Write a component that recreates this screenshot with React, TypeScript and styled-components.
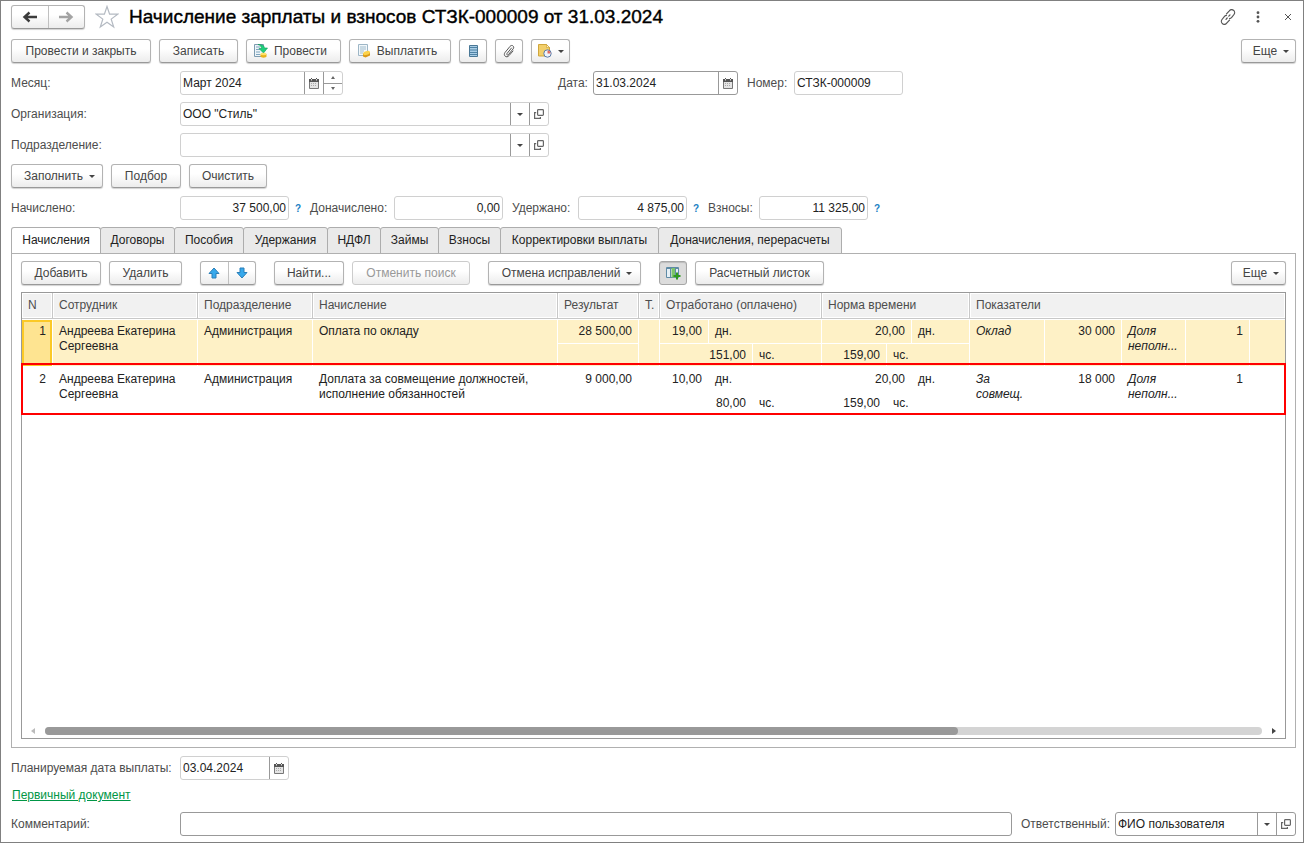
import React from "react";
import styled, { createGlobalStyle, css } from "styled-components";

const GlobalStyle = createGlobalStyle`
  *, *::before, *::after { box-sizing: border-box; }
  body {
    margin: 0;
    background: #fff;
    color: #4d4d4d;
    font: 12px/15px "Liberation Sans", Arial, sans-serif;
  }
  button, input, select { font: inherit; color: inherit; margin: 0; }
`;

const Window = styled.main`
  display: flex;
  flex-direction: column;
  min-height: 100vh;
  padding: 4px 7px 6px 10px;
  border: 1px solid #808080;
`;

const TitleBar = styled.header`
  display: flex;
  align-items: center;
  gap: 10px;
  height: 24px;
  margin-bottom: 10px;
`;

const Title = styled.h1`
  margin: 0 auto 0 0;
  color: #000;
  font-size: 19px;
  line-height: 24px;
  font-weight: 400;
  white-space: nowrap;
  -webkit-text-stroke: 0.4px #000;
`;

const IconButton = styled.button`
  display: flex;
  align-items: center;
  justify-content: center;
  padding: 0;
  border: 0;
  background: none;
  cursor: pointer;
`;

const WindowActions = styled.div`
  display: flex;
  gap: 14px;
  button { width: 16px; height: 16px; }
`;

const Toolbar = styled.div<{ $after?: number }>`
  display: flex;
  gap: 8px;
  margin-bottom: ${(p) => p.$after ?? 8}px;
`;

const Spacer = styled.span<{ $grow?: boolean }>`
  flex: ${(p) => (p.$grow ? "1" : "0 0 2px")};
`;

const raised = css`
  height: 24px;
  border: 1px solid #b3b3b3;
  border-bottom-color: #999;
  border-radius: 3px;
  background: linear-gradient(#fff 40%, #ececec);
  box-shadow: 0 1px 1px rgba(0, 0, 0, 0.18);
`;

const Button = styled.button<{ $w: number; $pressed?: boolean; $kind?: "menu" | "icon" }>`
  ${raised}
  display: flex;
  flex: 0 0 ${(p) => p.$w}px;
  align-items: center;
  justify-content: center;
  gap: 6px;
  padding: ${(p) => (p.$kind === "menu" ? "0 0 0 5px" : p.$kind === "icon" ? "0 6px 0 0" : "0")};
  color: #444;
  white-space: nowrap;
  cursor: pointer;
  ${(p) =>
    p.$pressed &&
    css`
      background: #dcdcdc;
      border-color: #a6a6a6;
      box-shadow: inset 0 1px 1px rgba(0, 0, 0, 0.15);
    `}
  &:disabled {
    color: #999;
    border-color: #ccc;
    box-shadow: none;
    cursor: default;
  }
`;

const Pair = styled.div<{ $w: number }>`
  ${raised}
  display: flex;
  flex: 0 0 ${(p) => p.$w}px;
  button { flex: 1; }
  button + button { border-left: 1px solid #c0c0c0; }
`;

const FormRow = styled.div<{ $after?: number }>`
  display: flex;
  align-items: center;
  height: 24px;
  margin-bottom: ${(p) => p.$after ?? 7}px;
`;

const Label = styled.label<{ $w: number }>`
  flex: 0 0 ${(p) => p.$w}px;
  white-space: nowrap;
`;

const Slot = styled.div`
  flex: 0 0 378px;
`;

const Gap = styled.span`
  flex: 0 0 9px;
`;

const Field = styled.div<{ $w?: number; $dark?: boolean }>`
  display: flex;
  flex: ${(p) => (p.$w ? `0 0 ${p.$w}px` : "1")};
  width: ${(p) => (p.$w ? `${p.$w}px` : "auto")};
  height: 24px;
  border: 1px solid ${(p) => (p.$dark ? "#999" : "#d0d0d0")};
  border-radius: 3px;
  background: #fff;
`;

const TextInput = styled.input<{ $right?: boolean }>`
  flex: 1;
  min-width: 0;
  height: 22px;
  padding: 0 2px;
  border: 0;
  outline: 0;
  background: none;
  color: #222;
  text-align: ${(p) => (p.$right ? "right" : "left")};
`;

const FieldButton = styled(IconButton)`
  flex: 0 0 19px;
  padding-right: 1px;
  border-left: 1px solid #999;
`;

const Stepper = styled.div`
  display: flex;
  flex-direction: column;
  flex: 0 0 19px;
  border-left: 1px solid #999;
  button { flex: 1; }
  button + button { border-top: 1px solid #999; }
`;

const SelectBox = styled.div`
  display: grid;
  flex: 1;
  grid-template-columns: 1fr 19px;
  select {
    grid-area: 1 / 1 / 2 / 3;
    padding: 0 2px;
    border: 0;
    outline: 0;
    appearance: none;
    background: none;
    color: #222;
  }
`;

const SelectArrow = styled.span`
  display: flex;
  grid-area: 1 / 2;
  align-items: center;
  justify-content: center;
  padding-right: 1px;
  border-left: 1px solid #999;
  pointer-events: none;
`;

const Help = styled.button`
  width: 21px;
  padding: 0 3px 0 0;
  border: 0;
  background: none;
  color: #1a7fc4;
  font-size: 10px;
  font-weight: 700;
  cursor: pointer;
`;

const TabList = styled.div`
  display: flex;
  height: 27px;
  margin-bottom: -1px;
`;

const Tab = styled.button<{ $w: number; $active?: boolean }>`
  flex: 0 0 ${(p) => p.$w + 1}px;
  margin-right: -1px;
  padding: 0;
  border: 1px solid #adadad;
  border-bottom-color: ${(p) => (p.$active ? "#fff" : "#adadad")};
  border-radius: 3px 3px 0 0;
  background: ${(p) => (p.$active ? "#fff" : "#eaeaea")};
  color: #222;
  white-space: nowrap;
  cursor: pointer;
`;

const Panel = styled.section`
  display: flex;
  flex: 1;
  flex-direction: column;
  margin: 0 0 8px;
  padding: 7px 9px 8px;
  border: 1px solid #b0b0b0;
`;

const Body = styled.div`
  display: flex;
  flex: 1;
  flex-direction: column;
`;

const TableFrame = styled.div`
  display: flex;
  flex: 1;
  flex-direction: column;
  justify-content: space-between;
  border: 1px solid #999;
`;

const Grid = styled.table`
  width: 100%;
  table-layout: fixed;
  border-collapse: separate;
  border-spacing: 0;
  color: #222;
  th {
    height: 26px;
    padding: 0 6px;
    border-right: 1px solid #c8c8c8;
    border-bottom: 1px solid #c8c8c8;
    background: #f1f1f1;
    box-shadow: inset 0 0 0 1px #fff;
    color: #4d4d4d;
    font-weight: 400;
    text-align: left;
    white-space: nowrap;
  }
  th:last-child { border-right: 0; }
`;

const Row = styled.tr<{ $selected?: boolean; $marked?: boolean }>`
  position: relative;
  background: ${(p) => (p.$selected ? "#fef1c6" : "#fff")};
  td:first-child {
    background: ${(p) => (p.$selected ? "#fee491" : "none")};
    box-shadow: ${(p) => (p.$selected ? "inset 0 0 0 2px #fbc926" : "none")};
  }
  td:last-child { border-right: 0; }
  ${(p) =>
    p.$marked &&
    css`
      td:first-child::after {
        content: "";
        position: absolute;
        inset: -4px -1px 0;
        border: 2px solid #f00;
        pointer-events: none;
      }
    `}
`;

const Cell = styled.td<{ $right?: boolean; $italic?: boolean; $split?: boolean }>`
  height: 48px;
  padding: ${(p) => (p.$split ? "0" : "4px 6px")};
  border: solid #fff;
  border-width: 1px 1px 1px 0;
  vertical-align: top;
  text-align: ${(p) => (p.$right ? "right" : "left")};
  font-style: ${(p) => (p.$italic ? "italic" : "normal")};
`;

const SubRow = styled.div`
  display: flex;
  height: 23px;
  & + & { border-top: 1px solid #fff; }
`;

const SubCell = styled.div<{ $w?: number }>`
  flex: ${(p) => (p.$w ? `0 0 ${p.$w}px` : "1")};
  padding: 4px 6px 0;
  text-align: ${(p) => (p.$w ? "right" : "left")};
  & + & { border-left: 1px solid #fff; }
`;

const ScrollBar = styled.div`
  display: flex;
  align-items: center;
  gap: 9px;
  height: 14px;
  padding: 0 9px;
`;

const ScrollTrack = styled.div`
  flex: 1;
  height: 8px;
  border-radius: 4px;
  background: #d4d4d4;
`;

const ScrollThumb = styled.div`
  width: 75%;
  height: 8px;
  border-radius: 4px;
  background: #999;
`;

const DocLink = styled.a`
  align-self: flex-start;
  margin: 1px 0 9px 1px;
  color: #009646;
`;

const Caret = () => (
  <svg width="6" height="3" viewBox="0 0 6 3"><path d="M0 0h6L3 3z" fill="#444" /></svg>
);

const CalendarIcon = () => (
  <svg width="10" height="11" viewBox="0 0 10 11">
    <path d="M.5 1.500h9v9h-9z" fill="#e4e4e4" stroke="#777" />
    <path d="M0 1h10v3H0z" fill="#555" />
    <path d="M2.500 0v2M7.500 0v2" stroke="#555" />
    <path d="M2.500 1v1.500M7.500 1v1.500" stroke="#ddd" />
    <path d="M2 5.500h6M2 7.500h6" stroke="#aaa" strokeDasharray="1 1" />
  </svg>
);

const OpenIcon = () => (
  <svg width="10" height="10" viewBox="0 0 10 10" fill="none" stroke="#666" strokeWidth="1.200">
    <rect x="3.600" y=".6" width="5.800" height="5.800" rx=".8" />
    <path d="M2.200 3.600H.6v5.800h5.800V8" />
  </svg>
);

const SideArrow = ({ right }: { right?: boolean }) => (
  <svg width="5" height="6" viewBox="0 0 5 6">
    {right ? <path d="M1 0v6l4-3z" fill="#444" /> : <path d="M4 0v6L0 3z" fill="#bbb" />}
  </svg>
);

const NavArrow = ({ forward }: { forward?: boolean }) => (
  <svg width="16" height="12" viewBox="0 0 16 12" fill="none" strokeWidth="2.400" stroke={forward ? "#a3a3a3" : "#3c3c3c"}>
    {forward ? <path d="M1 6h12M8.500 1.500L13.500 6l-5 4.500" /> : <path d="M15 6H3M7.500 1.500L2.500 6l5 4.500" />}
  </svg>
);

const StarIcon = () => (
  <svg width="24" height="24" viewBox="0 0 24 24" fill="none" stroke="#b4bac2" strokeWidth="1.200">
    <path d="M12 1.500l2.600 7.700h8.100l-6.500 4.900 2.500 7.900L12 17.200 5.300 22l2.500-7.900-6.500-4.900h8.100z" />
  </svg>
);

const LinkIcon = () => (
  <svg width="16" height="16" viewBox="0 0 16 16" fill="none" stroke="#555" strokeWidth="1.200" strokeLinecap="round">
    <path d="M6.500 4.800L9.300 1.900a2.900 2.900 0 0 1 4.700 3.600L11.500 8.700a2.800 2.800 0 0 1-2 1" />
    <path d="M9.500 11.200l-2.800 2.900A2.900 2.900 0 0 1 2 10.500l2.500-3.200a2.800 2.800 0 0 1 2-1" />
    <path d="M6 10.300l1.200-1.300M8.800 7.200L10 5.900" />
  </svg>
);

const DotsIcon = () => (
  <svg width="4" height="12" viewBox="0 0 4 12" fill="#555">
    <circle cx="2" cy="1.700" r="1.400" /><circle cx="2" cy="6" r="1.400" /><circle cx="2" cy="10.300" r="1.400" />
  </svg>
);

const CloseIcon = () => (
  <svg width="8" height="8" viewBox="0 0 8 8" stroke="#555"><path d="M1 1l6 6M7 1L1 7" /></svg>
);

const PostIcon = () => (
  <svg width="14" height="14" viewBox="0 0 14 14">
    <path d="M.5 .5h9v12h-9z" fill="#eef4f8" stroke="#7d9cb0" />
    <path d="M2 3h4M2 5.500h4M2 8h4M2 10.500h4" stroke="#7fa6bf" />
    <path d="M4 .5c4.500 0 6 1 6.500 3.500h3L9.500 9 5 4.500h2.500C7.500 2.500 6 1 4 .5z" fill="#1fd07c" stroke="#0e9a58" strokeWidth=".6" />
    <path d="M6.500 10v2.500c0 1.500 6 1.500 6 0V10z" fill="#e9b31c" />
    <ellipse cx="9.500" cy="10" rx="3" ry="1.200" fill="#ffe16b" />
  </svg>
);

const PayIcon = () => (
  <svg width="14" height="14" viewBox="0 0 14 14">
    <path d="M1.500 .5h9v11h-9z" fill="#f2f7fa" stroke="#9db6c6" />
    <path d="M3 3h6M3 5h6M3 7h4M3 9h3" stroke="#9fbccd" />
    <path d="M6 9.500v3l2.500 1 4.500-2V8L9 9.500z" fill="#d99a1a" />
    <ellipse cx="9.500" cy="9" rx="3.600" ry="1.800" fill="#fbd24c" transform="rotate(-18 9.500 9)" />
  </svg>
);

const RegisterIcon = () => (
  <svg width="9" height="12" viewBox="0 0 9 12">
    <path d="M.5 .5h8v11h-8z" fill="#a9cde6" stroke="#4a7896" />
    <path d="M1 2.500h7M1 5h7M1 7.500h7M1 9.500h7" stroke="#4f83a5" />
  </svg>
);

const ClipIcon = () => (
  <svg width="12" height="14" viewBox="0 0 12 14" fill="none" stroke="#555" strokeLinecap="round">
    <path d="M8.500 4L4 9.500c-.8 1 .6 2.200 1.400 1.200l4.800-5.900c1.700-2.200-1.300-4.700-3.100-2.500L2 8.500c-2.200 2.900 1.500 6 3.900 3.200L10 7" />
  </svg>
);

const ReportIcon = () => (
  <svg width="14" height="14" viewBox="0 0 14 14">
    <path d="M.5 .5h8l3 3v8.500H.5z" fill="#f2cf6a" stroke="#d0a63c" />
    <path d="M8.500 .5v3h3z" fill="#fff2c4" stroke="#c79a2c" strokeWidth=".6" />
    <circle cx="9.500" cy="9.500" r="3.700" fill="#eef4fb" stroke="#5a7aa8" />
    <path d="M9.500 9.500V6.500a3 3 0 0 1 3 3z" fill="#e0685f" />
  </svg>
);

const BlueArrow = ({ down }: { down?: boolean }) => (
  <svg width="12" height="12" viewBox="0 0 12 12">
    <path
      d="M6 1l5 5.500H8V11H4V6.500H1z"
      fill="#37a9ec"
      stroke="#2b7fb8"
      transform={down ? "rotate(180 6 6)" : undefined}
    />
  </svg>
);

const ColumnsIcon = () => (
  <svg width="15" height="14" viewBox="0 0 15 14">
    <path d="M.5 1.500h12v10H.5z" fill="#e6f0f6" stroke="#5f8ba6" />
    <path d="M1 2.500h11" stroke="#5f8ba6" />
    <path d="M5.500 2h3.500v9.500H5.500z" fill="#7cc46a" />
    <path d="M4.500 2v9.500M9.500 2v9.500" stroke="#5f8ba6" />
    <path d="M11 6.500v7M7.500 10h7" stroke="#2f9a1e" strokeWidth="2" />
  </svg>
);

const tabs: [string, number][] = [
  ["Начисления", 89], ["Договоры", 74], ["Пособия", 69], ["Удержания", 84], ["НДФЛ", 53],
  ["Займы", 58], ["Взносы", 62], ["Корректировки выплаты", 158], ["Доначисления, перерасчеты", 183],
];

const totals: { id: string; label: string; w: number; value: string; help: boolean }[] = [
  { id: "accrued", label: "Начислено:", w: 169, value: "37 500,00", help: true },
  { id: "extra", label: "Доначислено:", w: 84, value: "0,00", help: false },
  { id: "withheld", label: "Удержано:", w: 66, value: "4 875,00", help: true },
  { id: "fees", label: "Взносы:", w: 51, value: "11 325,00", help: true },
];

const columnWidths = [31, 145, 115, 245, 81, 21, 162, 148, 75, 77, 64, 64];

const rows = [
  { n: 1, accrual: "Оплата по окладу", result: "28 500,00", days: "19,00", hours: "151,00", indicator: "Оклад", amount: "30 000" },
  { n: 2, accrual: "Доплата за совмещение должностей, исполнение обязанностей", result: "9 000,00", days: "10,00", hours: "80,00", indicator: "За совмещ.", amount: "18 000" },
];

export default function App() {
  return (
    <Window>
      <GlobalStyle />
      <TitleBar>
        <Pair $w={74}>
          <IconButton aria-label="Назад"><NavArrow /></IconButton>
          <IconButton aria-label="Вперед"><NavArrow forward /></IconButton>
        </Pair>
        <IconButton aria-label="Избранное"><StarIcon /></IconButton>
        <Title>Начисление зарплаты и взносов СТЗК-000009 от 31.03.2024</Title>
        <WindowActions>
          <IconButton aria-label="Ссылка"><LinkIcon /></IconButton>
          <IconButton aria-label="Меню"><DotsIcon /></IconButton>
          <IconButton aria-label="Закрыть"><CloseIcon /></IconButton>
        </WindowActions>
      </TitleBar>

      <Toolbar>
        <Button $w={140}>Провести и закрыть</Button>
        <Button $w={79}>Записать</Button>
        <Button $w={95} $kind="icon"><PostIcon />Провести</Button>
        <Button $w={102} $kind="icon"><PayIcon />Выплатить</Button>
        <Button $w={28} aria-label="Движения"><RegisterIcon /></Button>
        <Button $w={28} aria-label="Файлы"><ClipIcon /></Button>
        <Button $w={39} aria-label="Отчеты"><ReportIcon /><Caret /></Button>
        <Spacer $grow />
        <Button $w={55} $kind="menu">Еще <Caret /></Button>
      </Toolbar>

      <FormRow>
        <Label $w={169} htmlFor="month">Месяц:</Label>
        <Slot>
          <Field $w={163}>
            <TextInput id="month" defaultValue="Март 2024" />
            <FieldButton aria-label="Выбрать месяц"><CalendarIcon /></FieldButton>
            <Stepper>
              <IconButton aria-label="Следующий месяц"><svg width="4" height="3" viewBox="0 0 4 3"><path d="M0 3h4L2 0z" fill="#666" /></svg></IconButton>
              <IconButton aria-label="Предыдущий месяц"><svg width="4" height="3" viewBox="0 0 4 3"><path d="M0 0h4L2 3z" fill="#666" /></svg></IconButton>
            </Stepper>
          </Field>
        </Slot>
        <Label $w={35} htmlFor="date">Дата:</Label>
        <Field $w={145} $dark>
          <TextInput id="date" defaultValue="31.03.2024" />
          <FieldButton aria-label="Выбрать дату"><CalendarIcon /></FieldButton>
        </Field>
        <Gap />
        <Label $w={47} htmlFor="number">Номер:</Label>
        <Field $w={109}><TextInput id="number" defaultValue="СТЗК-000009" /></Field>
      </FormRow>

      <FormRow>
        <Label $w={169} htmlFor="org">Организация:</Label>
        <Field $w={369}>
          <SelectBox>
            <select id="org"><option>ООО "Стиль"</option></select>
            <SelectArrow><Caret /></SelectArrow>
          </SelectBox>
          <FieldButton aria-label="Открыть организацию"><OpenIcon /></FieldButton>
        </Field>
      </FormRow>

      <FormRow>
        <Label $w={169} htmlFor="dept">Подразделение:</Label>
        <Field $w={369}>
          <SelectBox>
            <select id="dept"><option></option></select>
            <SelectArrow><Caret /></SelectArrow>
          </SelectBox>
          <FieldButton aria-label="Открыть подразделение"><OpenIcon /></FieldButton>
        </Field>
      </FormRow>

      <Toolbar>
        <Button $w={92} $kind="menu">Заполнить <Caret /></Button>
        <Button $w={70}>Подбор</Button>
        <Button $w={78}>Очистить</Button>
      </Toolbar>

      <FormRow>
        {totals.map((t) => (
          <React.Fragment key={t.id}>
            <Label $w={t.w} htmlFor={t.id}>{t.label}</Label>
            <Field $w={109}><TextInput id={t.id} $right defaultValue={t.value} /></Field>
            {t.help ? <Help aria-label="Справка">?</Help> : <Gap />}
          </React.Fragment>
        ))}
      </FormRow>

      <Body>
        <TabList role="tablist">
          {tabs.map(([name, w], i) => (
            <Tab key={name} role="tab" aria-selected={i === 0} $w={w} $active={i === 0}>{name}</Tab>
          ))}
        </TabList>
        <Panel>
          <Toolbar $after={7}>
            <Button $w={80}>Добавить</Button>
            <Button $w={73}>Удалить</Button>
            <Spacer />
            <Pair $w={56}>
              <IconButton aria-label="Вверх"><BlueArrow /></IconButton>
              <IconButton aria-label="Вниз"><BlueArrow down /></IconButton>
            </Pair>
            <Spacer />
            <Button $w={70}>Найти...</Button>
            <Button $w={118} disabled>Отменить поиск</Button>
            <Spacer />
            <Button $w={153} $kind="menu">Отмена исправлений <Caret /></Button>
            <Spacer />
            <Button $w={28} $pressed aria-label="Показатели"><ColumnsIcon /></Button>
            <Button $w={129}>Расчетный листок</Button>
            <Spacer $grow />
            <Button $w={55} $kind="menu">Еще <Caret /></Button>
          </Toolbar>
          <TableFrame>
            <Grid>
              <colgroup>
                {columnWidths.map((w, i) => <col key={i} width={w} />)}
                <col />
              </colgroup>
              <thead>
                <tr>
                  <th>N</th>
                  <th>Сотрудник</th>
                  <th>Подразделение</th>
                  <th>Начисление</th>
                  <th>Результат</th>
                  <th>Т.</th>
                  <th>Отработано (оплачено)</th>
                  <th>Норма времени</th>
                  <th colSpan={5}>Показатели</th>
                </tr>
              </thead>
              <tbody>
                {rows.map((r) => (
                  <Row key={r.n} $selected={r.n === 1} $marked={r.n === 2}>
                    <Cell $right>{r.n}</Cell>
                    <Cell>Андреева Екатерина Сергеевна</Cell>
                    <Cell>Администрация</Cell>
                    <Cell>{r.accrual}</Cell>
                    <Cell $split>
                      <SubRow><SubCell $w={80}>{r.result}</SubCell></SubRow>
                      <SubRow />
                    </Cell>
                    <Cell />
                    <Cell $split>
                      <SubRow><SubCell $w={48}>{r.days}</SubCell><SubCell>дн.</SubCell></SubRow>
                      <SubRow><SubCell $w={92}>{r.hours}</SubCell><SubCell>чс.</SubCell></SubRow>
                    </Cell>
                    <Cell $split>
                      <SubRow><SubCell $w={89}>20,00</SubCell><SubCell>дн.</SubCell></SubRow>
                      <SubRow><SubCell $w={64}>159,00</SubCell><SubCell>чс.</SubCell></SubRow>
                    </Cell>
                    <Cell $italic>{r.indicator}</Cell>
                    <Cell $right>{r.amount}</Cell>
                    <Cell $italic>Доля неполн...</Cell>
                    <Cell $right>1</Cell>
                    <Cell />
                  </Row>
                ))}
              </tbody>
            </Grid>
            <ScrollBar>
              <SideArrow />
              <ScrollTrack><ScrollThumb /></ScrollTrack>
              <SideArrow right />
            </ScrollBar>
          </TableFrame>
        </Panel>
      </Body>

      <FormRow>
        <Label $w={169} htmlFor="payDate">Планируемая дата выплаты:</Label>
        <Field $w={109}>
          <TextInput id="payDate" defaultValue="03.04.2024" />
          <FieldButton aria-label="Выбрать дату выплаты"><CalendarIcon /></FieldButton>
        </Field>
      </FormRow>
      <DocLink href="#document">Первичный документ</DocLink>
      <FormRow $after={0}>
        <Label $w={169} htmlFor="comment">Комментарий:</Label>
        <Field $dark><TextInput id="comment" /></Field>
        <Gap />
        <Label $w={94} htmlFor="owner">Ответственный:</Label>
        <Field $w={181} $dark>
          <SelectBox>
            <select id="owner"><option>ФИО пользователя</option></select>
            <SelectArrow><Caret /></SelectArrow>
          </SelectBox>
          <FieldButton aria-label="Открыть пользователя"><OpenIcon /></FieldButton>
        </Field>
      </FormRow>
    </Window>
  );
}
